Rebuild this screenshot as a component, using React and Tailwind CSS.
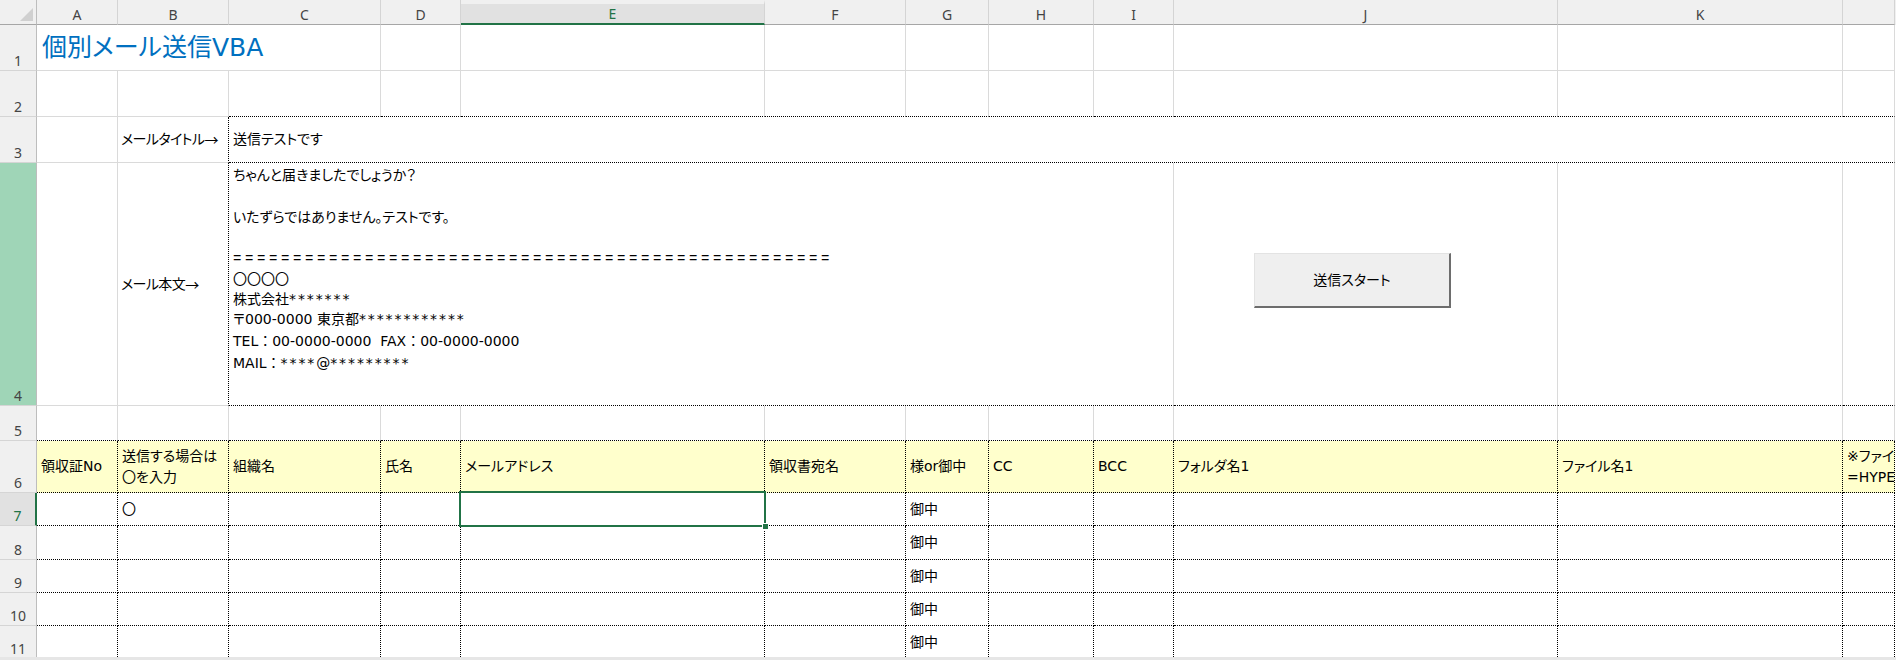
import React from "react";

// column widths (each includes its right grid line)
const W = {
    h: "w-[37px]",
    A: "w-[81px]",
    B: "w-[111px]",
    C: "w-[152px]",
    D: "w-[80px]",
    E: "w-[304px]",
    F: "w-[141px]",
    G: "w-[83px]",
    H: "w-[105px]",
    I: "w-[80px]",
    J: "w-[384px]",
    K: "w-[285px]",
    L: "w-[52px]",
};
const COLS = ["A", "B", "C", "D", "E", "F", "G", "H", "I", "J", "K", "L"];

const BR = {
    g: "border-r border-r-[#dadada]",
    d: "border-r border-r-black [border-right-style:dotted]",
    n: "",
};
const BB = {
    g: "border-b border-b-[#dadada]",
    d: "border-b border-b-black [border-bottom-style:dotted]",
};

const Cell = ({ w, r = "g", b = "g", className = "", children }) => (
    <div className={`h-full shrink-0 flex items-center overflow-hidden whitespace-nowrap ${w} ${BR[r]} ${BB[b]} ${className}`}>
        {children}
    </div>
);

const RowHead = ({ num, state }) => {
    let look = "bg-[#f0f0f0] text-[#444] border-r border-r-[#bdbdbd]";
    if (state === "green") look = "bg-[#9fd5b7] text-[#444] border-r border-r-[#bdbdbd]";
    if (state === "active") look = "bg-[#e1e1e1] text-[#217346] border-r-2 border-r-[#217346]";
    return (
        <div className={`h-full shrink-0 w-[37px] flex items-end justify-center border-b border-b-[#d5d5d5] text-[14px] leading-[18px] font-['Noto_Sans',sans-serif] [font-feature-settings:normal] ${look}`}>
            {num}
        </div>
    );
};

const Row = ({ h, num, state, children }) => (
    <div className={`flex shrink-0 ${h}`}>
        <RowHead num={num} state={state} />
        {children}
    </div>
);

// asterisks are wider in the sheet's font
const Stars = ({ text }) =>
    text.split(/(\*+)/).map((part, i) =>
        part.startsWith("*") ? (
            <span key={i} className="tracking-[1.9px]">{part}</span>
        ) : (
            <span key={i}>{part}</span>
        )
    );

const Arrow = () => <span className="font-['Noto_Sans_CJK_JP',sans-serif]">→</span>;

const bodyLines = [
    { t: "ちゃんと届きましたでしょうか？", h: "h-[21px]" },
    { t: "", h: "h-[21px]" },
    { t: "いたずらではありません。テストです。", h: "h-[21px]" },
    { t: "", h: "h-[21px]" },
    { t: "==================================================", h: "h-[20px]", mono: true },
    { t: "〇〇〇〇", h: "h-[20px]" },
    { t: "株式会社*******", h: "h-[20px]" },
    { t: "〒000-0000 東京都************", h: "h-[20px]" },
    { t: "TEL：00-0000-0000  FAX：00-0000-0000", h: "h-[24px]", full: true },
    { t: "MAIL：****@*********", h: "h-[20px]", full: true },
];

const header6 = {
    A: "領収証No",
    B: "送信する場合は\n〇を入力",
    C: "組織名",
    D: "氏名",
    E: "メールアドレス",
    F: "領収書宛名",
    G: "様or御中",
    H: "CC",
    I: "BCC",
    J: "フォルダ名1",
    K: "ファイル名1",
    L: "※ファイルパス確認用\n=HYPERLINK(",
};

const DataRow = ({ h, num, first }) => (
    <Row h={h} num={num} state={first ? "active" : undefined}>
        {COLS.map((c) => (
            <Cell key={c} w={W[c]} r="d" b="d" className={`pl-[4px] ${c === "E" && first ? "relative overflow-visible" : ""}`}>
                {c === "B" && first ? "〇" : null}
                {c === "G" ? "御中" : null}
                {c === "E" && first ? (
                    <div className="absolute -inset-[2px] border-2 border-[#217346]">
                        <div className="absolute -right-[5px] -bottom-[5px] w-[7px] h-[7px] bg-[#217346] border border-white" />
                    </div>
                ) : null}
            </Cell>
        ))}
    </Row>
);

export default function App() {
    return (
        <div className="relative w-[1896px] h-[660px] overflow-hidden bg-white text-black text-[14px] font-['DejaVu_Sans','Noto_Sans_CJK_JP',sans-serif] [font-feature-settings:'palt']">
            <div className="h-[657px] overflow-hidden flex flex-col">
                {/* column letters */}
                <div className="flex shrink-0 h-[25px] bg-[#f0f0f0] font-['Noto_Sans',sans-serif] [font-feature-settings:normal] text-[14px] text-[#444]">
                    <div className="relative w-[37px] h-full shrink-0 border-r border-r-[#bdbdbd] border-b border-b-[#a6a6a6]">
                        <svg className="absolute left-0 top-0" width="37" height="25" viewBox="0 0 37 25">
                            <polygon points="33,8 33,21 20,21" fill="#d0d0d0" />
                        </svg>
                    </div>
                    {COLS.map((c) =>
                        c === "E" ? (
                            <div key={c} className={`${W[c]} h-full shrink-0 flex items-center justify-center border-t-4 border-t-[#f0f0f0] bg-[#e1e1e1] border-r border-r-[#d4d4d4] border-b-2 border-b-[#217346] text-[#217346]`}>
                                {c}
                            </div>
                        ) : (
                            <div key={c} className={`${W[c]} h-full shrink-0 flex items-center justify-center pt-[4px] border-r border-r-[#d4d4d4] border-b border-b-[#a6a6a6]`}>
                                {c === "L" ? "" : c}
                            </div>
                        )
                    )}
                </div>

                {/* row 1 */}
                <Row h="h-[46px]" num="1">
                    <Cell w="w-[344px]" className="pl-[5px]">
                        <span className="text-[25px] text-[#0070c0]">個別メール送信VBA</span>
                    </Cell>
                    {["D", "E", "F", "G", "H", "I", "J", "K", "L"].map((c) => (
                        <Cell key={c} w={W[c]} />
                    ))}
                </Row>

                {/* row 2 */}
                <Row h="h-[46px]" num="2">
                    <Cell w={W.A} />
                    <Cell w={W.B} />
                    {["C", "D", "E", "F", "G", "H", "I", "J", "K", "L"].map((c) => (
                        <Cell key={c} w={W[c]} b="d" />
                    ))}
                </Row>

                {/* row 3 */}
                <Row h="h-[46px]" num="3">
                    <Cell w={W.A} />
                    <Cell w={W.B} r="d" className="pl-[3px] tracking-[-0.6px]">
                        メールタイトル<Arrow />
                    </Cell>
                    <Cell w="w-[1666px]" b="d" className="pl-[4px]">送信テストです</Cell>
                </Row>

                {/* row 4 */}
                <Row h="h-[243px]" num="4" state="green">
                    <Cell w={W.A} />
                    <Cell w={W.B} r="d" className="pl-[3px] tracking-[-0.6px]">
                        メール本文<Arrow />
                    </Cell>
                    <Cell w="w-[945px]" b="d" className="pl-[4px] !items-start pt-[2px]">
                        <div className="flex flex-col">
                            {bodyLines.map((l, i) => (
                                <div
                                    key={i}
                                    className={`${l.h} flex items-center whitespace-pre ${l.mono ? "font-['Liberation_Mono',monospace] tracking-[3.6px]" : ""} ${l.full ? "[font-feature-settings:normal]" : ""}`}
                                >
                                    {l.mono ? l.t : <Stars text={l.t} />}
                                </div>
                            ))}
                        </div>
                    </Cell>
                    <Cell w={W.J} b="d" />
                    <Cell w={W.K} b="d" />
                    <Cell w={W.L} b="d" />
                </Row>

                {/* row 5 */}
                <Row h="h-[35px]" num="5">
                    {COLS.map((c) => (
                        <Cell key={c} w={W[c]} b="d" />
                    ))}
                </Row>

                {/* row 6 headings */}
                <Row h="h-[52px]" num="6">
                    {COLS.map((c) => (
                        <Cell key={c} w={W[c]} r="d" b="d" className="bg-[#ffffcc] pl-[4px]">
                            <div className="whitespace-pre leading-[21px]">{header6[c]}</div>
                        </Cell>
                    ))}
                </Row>

                <DataRow h="h-[33px]" num="7" first />
                <DataRow h="h-[34px]" num="8" />
                <DataRow h="h-[33px]" num="9" />
                <DataRow h="h-[33px]" num="10" />
                <DataRow h="h-[33px]" num="11" />
            </div>
            <div className="h-[3px] bg-[#e6e6e6]" />

            {/* form button over the sheet */}
            <button
                type="button"
                className="absolute left-[1254px] top-[253px] w-[197px] h-[55px] bg-[#efefef] border-t border-l border-t-[#e3e3e3] border-l-[#e3e3e3] border-r-2 border-b-2 border-r-[#6d6d6d] border-b-[#6d6d6d] text-[14px] text-black flex items-center justify-center"
            >
                送信スタート
            </button>
        </div>
    );
}
